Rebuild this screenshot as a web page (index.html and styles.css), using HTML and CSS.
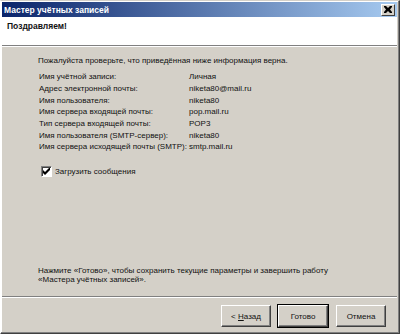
FILE: index.html
```html
<!DOCTYPE html>
<html lang="ru">
<head>
    <meta charset="UTF-8">
    <title>Мастер учётных записей</title>
    <link rel="stylesheet" href="styles.css">
</head>
<body>
    <div class="window">
        <div class="title-bar">
            <span class="title-text">Мастер учётных записей</span>
            <div class="close-btn">
                <svg width="8" height="7" viewBox="0 0 8 7">
                    <path d="M0 0h2l2 2 2-2h2v1l-2 2.5 2 2.5v1h-2l-2-2-2 2h-2v-1l2-2.5-2-2.5z" fill="#000"/>
                </svg>
            </div>
        </div>
        <div class="header">
            <div class="header-title">Поздравляем!</div>
        </div>
        <div class="content">
            <div class="intro">Пожалуйста проверьте, что приведённая ниже информация верна.</div>
            <div class="info-table">
                <div class="info-label">Имя учётной записи:</div>
                <div class="info-value">Личная</div>
                <div class="info-label">Адрес электронной почты:</div>
                <div class="info-value">niketa80@mail.ru</div>
                <div class="info-label">Имя пользователя:</div>
                <div class="info-value">niketa80</div>
                <div class="info-label">Имя сервера входящей почты:</div>
                <div class="info-value">pop.mail.ru</div>
                <div class="info-label">Тип сервера входящей почты:</div>
                <div class="info-value">POP3</div>
                <div class="info-label">Имя пользователя (SMTP-сервер):</div>
                <div class="info-value">niketa80</div>
                <div class="info-label">Имя сервера исходящей почты (SMTP):</div>
                <div class="info-value">smtp.mail.ru</div>
            </div>
            <label class="check-row">
                <span class="check-box">
                    <svg width="7" height="7" viewBox="0 0 7 7">
                        <path d="M0 2v3l2 2 5-5v-3l-5 5z" fill="#000"/>
                    </svg>
                </span>
                <span>Загрузить сообщения</span>
            </label>
            <div class="finish-text">Нажмите «Готово», чтобы сохранить текущие параметры и завершить работу<br>«Мастера учётных записей».</div>
        </div>
        <div class="footer">
            <div class="btn"><span>&lt; <u>Н</u>азад</span></div>
            <div class="btn btn-default">Готово</div>
            <div class="btn btn-cancel">Отмена</div>
        </div>
    </div>
</body>
</html>
```

FILE: styles.css
```css
body {
    margin: 0;
    width: 400px;
    height: 334px;
    overflow: hidden;
    font-family: "Liberation Sans", "DejaVu Sans", sans-serif;
    font-size: 8px;
    color: #111;
    background: #d4d0c8;
}
.window {
    box-sizing: border-box;
    width: 400px;
    height: 334px;
    display: flex;
    flex-direction: column;
    background: #d4d0c8;
    border-top: 1px solid #d4d0c8;
    border-left: 1px solid #ffffff;
    border-right: 1px solid #404040;
    border-bottom: 1px solid #404040;
    box-shadow: inset -1px -1px 0 #808080, inset 1px 1px 0 #ffffff;
    padding: 1px 2px 2px 1px;
}
.title-bar {
    height: 15px;
    flex: none;
    display: flex;
    align-items: center;
    justify-content: space-between;
    padding: 0 2px 0 2px;
    background: linear-gradient(to right, #0a246a, #a6caf0);
}
.title-text {
    color: #fff;
    font-weight: bold;
    font-size: 8.5px;
}
.close-btn {
    width: 14px;
    height: 12px;
    box-sizing: border-box;
    display: flex;
    align-items: center;
    justify-content: center;
    background: #d4d0c8;
    border-top: 1px solid #fff;
    border-left: 1px solid #fff;
    border-right: 1px solid #404040;
    border-bottom: 1px solid #404040;
}
.header {
    height: 28px;
    flex: none;
    background: #fff;
    border-bottom: 1px solid #808080;
    box-shadow: 0 1px 0 #fff;
    padding-left: 5px;
}
.header-title {
    font-weight: bold;
    font-size: 8.5px;
    margin-top: 3px;
    line-height: 13px;
}
.content {
    flex: 1;
    display: flex;
    flex-direction: column;
    padding: 8px 10px 12px 36px;
    margin-top: 1px;
    border-bottom: 1px solid #808080;
    box-shadow: 0 1px 0 #fff;
}
.intro {
    line-height: 12px;
}
.info-table {
    display: grid;
    grid-template-columns: 150px auto;
    grid-auto-rows: 11.67px;
    align-items: center;
    margin-top: 4px;
    padding-left: 1px;
}
.check-row {
    display: flex;
    align-items: center;
    gap: 3px;
    margin-top: 12px;
    margin-left: 3px;
    line-height: 13px;
}
.check-box {
    box-sizing: border-box;
    width: 11px;
    height: 11px;
    display: flex;
    align-items: center;
    justify-content: center;
    background: #fff;
    border-top: 1px solid #808080;
    border-left: 1px solid #808080;
    border-right: 1px solid #fff;
    border-bottom: 1px solid #fff;
    box-shadow: inset 1px 1px 0 #404040;
}
.finish-text {
    margin-top: auto;
    line-height: 9px;
}
.footer {
    box-sizing: border-box;
    height: 33px;
    flex: none;
    display: flex;
    justify-content: flex-end;
    align-items: flex-start;
    gap: 7px;
    padding: 7px 11px 0 0;
    margin-top: 1px;
}
.btn {
    box-sizing: border-box;
    width: 50px;
    height: 22px;
    display: flex;
    align-items: center;
    justify-content: center;
    background: #d4d0c8;
    border-top: 1px solid #fff;
    border-left: 1px solid #fff;
    border-right: 1px solid #404040;
    border-bottom: 1px solid #404040;
    box-shadow: inset -1px -1px 0 #808080;
}
.btn-default {
    outline: 1px solid #000;
}
.btn-cancel {
    margin-left: 1px;
}
```
